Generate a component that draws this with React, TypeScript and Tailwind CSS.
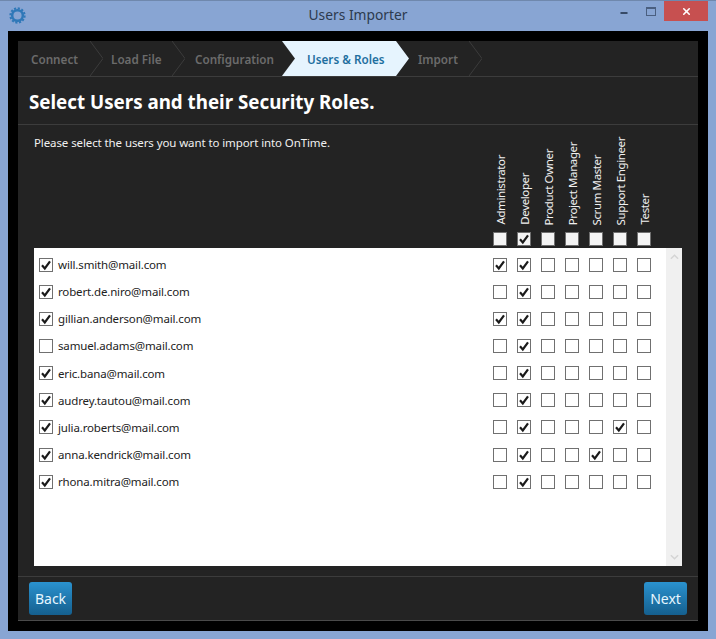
import { Minus, X } from "lucide-react";

const ROLES = [
  "Administrator",
  "Developer",
  "Product Owner",
  "Project Manager",
  "Scrum Master",
  "Support Engineer",
  "Tester",
];

const USERS = [
  { email: "will.smith@mail.com", on: true, roles: [0, 1] },
  { email: "robert.de.niro@mail.com", on: true, roles: [1] },
  { email: "gillian.anderson@mail.com", on: true, roles: [0, 1] },
  { email: "samuel.adams@mail.com", on: false, roles: [1] },
  { email: "eric.bana@mail.com", on: true, roles: [1] },
  { email: "audrey.tautou@mail.com", on: true, roles: [1] },
  { email: "julia.roberts@mail.com", on: true, roles: [1, 5] },
  { email: "anna.kendrick@mail.com", on: true, roles: [1, 4] },
  { email: "rhona.mitra@mail.com", on: true, roles: [1] },
];

const STEPS = [
  { name: "Connect", cls: "w-[72px] pl-[13px]" },
  { name: "Load File", cls: "w-[82px] pl-[21px]" },
  { name: "Configuration", cls: "w-[110px] pl-[23px]" },
];

function Check({ on, fill }: { on: boolean; fill?: boolean }) {
  return (
    <span
      className={`flex h-[14px] w-[14px] shrink-0 items-center justify-center border border-[#707070] ${fill ? "bg-[#f4f4f4]" : "bg-white"}`}
    >
      {on && (
        <svg viewBox="0 0 12 12" className="h-[12px] w-[12px]">
          <path d="M2 6.2 L4.8 9.4 L10 2.4" fill="none" stroke="#1a1a1a" strokeWidth="2.2" />
        </svg>
      )}
    </span>
  );
}

function Chevron() {
  return (
    <svg viewBox="0 0 13 35" className="absolute left-full top-0 h-[35px] w-[13px]">
      <path d="M0 0 L13 17.5 L0 35" fill="none" stroke="#3c3c3c" strokeWidth="1" />
    </svg>
  );
}

export default function App() {
  return (
    <div className="flex h-[639px] w-[716px] flex-col overflow-hidden border-t border-[#6f88ad] bg-[#88a5d3] font-['Noto_Sans',sans-serif]">
      {/* Title bar */}
      <div className="relative flex h-[30px] shrink-0 items-center justify-center pb-[1px] text-[13.8px] text-[#2c3a4e]">
        <svg viewBox="0 0 24 24" className="absolute left-[9px] top-[6px] h-[17px] w-[17px]">
          <circle cx="12" cy="12" r="7.5" fill="none" stroke="#2f78b8" strokeWidth="3.5" />
          <circle cx="12" cy="12" r="10" fill="none" stroke="#2f78b8" strokeWidth="3" strokeDasharray="3 2.24" />
        </svg>
        Users Importer
        <Minus className="absolute left-[619px] top-[7px] h-[10px] w-[10px] text-[#1c2c44]" strokeWidth={4} />
        <span className="absolute left-[646px] top-[6px] h-[9px] w-[10px] border border-t-2 border-[#4a5f80]" />
        <span className="absolute left-[664px] top-0 flex h-[20px] w-[44px] items-center justify-center bg-[#c75050]">
          <X className="h-[11px] w-[11px] text-white" strokeWidth={3.5} />
        </span>
      </div>

      <div className="mx-[8px] flex h-[600px] flex-col bg-black p-[10px]">
        <div className="flex h-[580px] flex-col border-b border-[#4a4a4a] bg-[#232323]">
          {/* Wizard steps */}
          <div className="flex h-[36px] shrink-0 border-b border-[#3c3c3c] text-[11.7px] font-semibold leading-[37px] text-[#6b6b6b]">
            {STEPS.map((s) => (
              <div key={s.name} className={`relative shrink-0 ${s.cls}`}>
                {s.name}
                <Chevron />
              </div>
            ))}
            <div className="relative z-10 h-[35px] w-[127px] shrink-0 bg-[#e6f4fe] pl-[25px] text-[#1f6f9f] [clip-path:polygon(0_0,114px_0,127px_50%,114px_100%,0_100%,13px_50%)]">
              Users &amp; Roles
            </div>
            <div className="relative w-[60px] shrink-0 pl-[9px]">
              Import
              <Chevron />
            </div>
          </div>

          {/* Heading */}
          <div className="flex h-[48px] shrink-0 items-center border-b border-[#3c3c3c] pl-[11px] pt-[3px] text-[18.75px] font-bold text-white">
            Select Users and their Security Roles.
          </div>

          {/* Role headers */}
          <div className="flex h-[123px] shrink-0 pl-[16px] pr-[16px]">
            <p className="flex-1 pt-[10px] text-[11.5px] leading-[16px] tracking-[-0.1px] text-[#f0f0f0]">
              Please select the users you want to import into OnTime.
            </p>
            <div className="mr-[31px] flex gap-[10px] pb-[2px]">
              {ROLES.map((r, i) => (
                <div key={r} className="flex w-[14px] flex-col items-center justify-end gap-[4px]">
                  <span className="translate-x-[1px] translate-y-[-3px] rotate-180 whitespace-nowrap text-[11.5px] leading-[14px] tracking-[-0.4px] text-[#f0f0f0] [writing-mode:vertical-rl]">
                    {r}
                  </span>
                  <Check on={i === 1} fill />
                </div>
              ))}
            </div>
          </div>

          {/* User list */}
          <div className="mx-[16px] flex h-[318px] shrink-0 bg-white">
            <div className="flex-1 pt-[3.2px]">
              {USERS.map((u) => (
                <div key={u.email} className="flex h-[27.12px] items-center pl-[5px] pr-[15px]">
                  <Check on={u.on} />
                  <span className="ml-[5px] flex-1 text-[11.5px] tracking-[-0.15px] text-[#222222]">{u.email}</span>
                  <div className="flex gap-[10px]">
                    {ROLES.map((r, i) => (
                      <Check key={r} on={u.roles.includes(i)} />
                    ))}
                  </div>
                </div>
              ))}
            </div>
            <div className="flex w-[16px] shrink-0 flex-col items-center justify-between bg-[#f0f0f0] py-[6px]">
              <svg viewBox="0 0 10 6" className="h-[6px] w-[9px]">
                <path d="M1 5 L5 1 L9 5" fill="none" stroke="#d4d4d4" strokeWidth="1.6" />
              </svg>
              <svg viewBox="0 0 10 6" className="h-[6px] w-[9px]">
                <path d="M1 1 L5 5 L9 1" fill="none" stroke="#d4d4d4" strokeWidth="1.6" />
              </svg>
            </div>
          </div>

          {/* Footer */}
          <div className="mt-[10px] flex flex-1 items-start justify-between border-t border-[#3c3c3c] pl-[11px] pr-[11px] pt-[5px]">
            <button className="h-[33px] w-[43px] rounded-[3px] bg-gradient-to-b from-[#2a92cf] to-[#15608f] text-[14px] text-[#e6f6ff]">
              Back
            </button>
            <button className="h-[33px] w-[43px] rounded-[3px] bg-gradient-to-b from-[#2a92cf] to-[#15608f] text-[14px] text-[#e6f6ff]">
              Next
            </button>
          </div>
        </div>
      </div>
    </div>
  );
}
